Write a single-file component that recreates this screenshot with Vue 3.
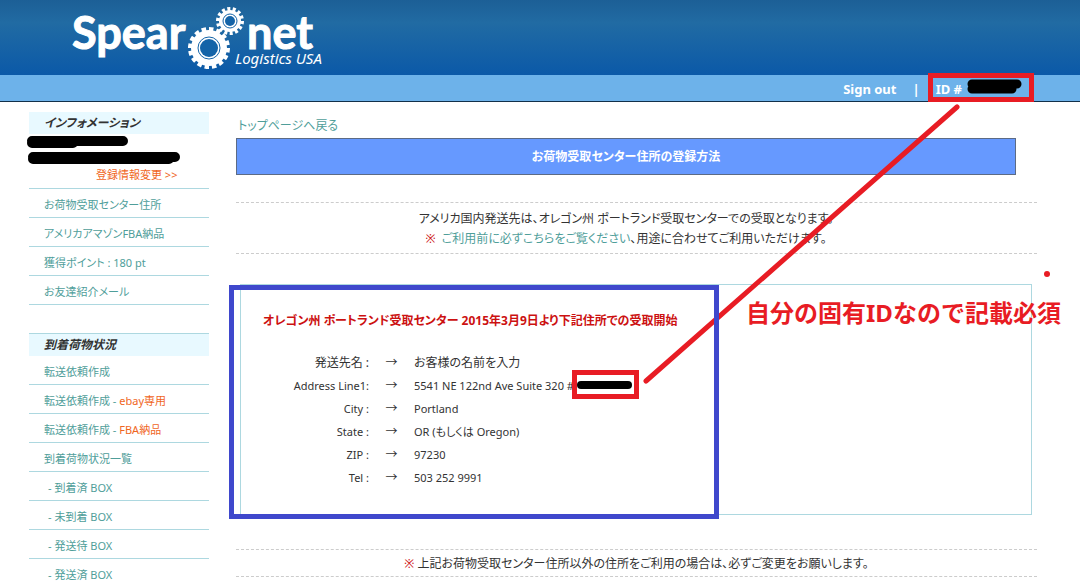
<template>
  <div class="page">
    <header class="site-header">
      <a class="logo" href="#" aria-label="Spearnet Logistics USA">
        <svg viewBox="0 0 270 75" width="270" height="75">
          <text class="logo-name" x="0" y="49">Spear</text>
          <text class="logo-name" x="175" y="49">net</text>
          <text class="logo-sub" x="163" y="64">Logistics USA</text>
          <g v-for="gear in gears" :key="gear.cx">
            <circle class="gear-teeth" :cx="gear.cx" :cy="gear.cy" :r="gear.r" :stroke-dasharray="gear.dash" pathLength="160" />
            <circle class="gear-body" :cx="gear.cx" :cy="gear.cy" :r="gear.r - 1" />
            <circle class="gear-ring" :cx="gear.cx" :cy="gear.cy" :r="gear.ring" />
            <circle class="gear-hole" :cx="gear.cx" :cy="gear.cy" :r="gear.ring - 2" />
          </g>
        </svg>
      </a>
    </header>
    <nav class="account-bar">
      <a href="#">Sign out</a>
      <span>|</span>
      <span class="account-id">ID #</span>
    </nav>

    <div class="layout">
      <aside class="sidebar">
        <section>
          <h2>インフォメーション</h2>
          <div class="profile">
            <svg class="redacted" viewBox="0 0 160 30" width="160" height="30">
              <path d="M7 7H98M7 9H48" />
              <path d="M8 23H150M8 25H144" />
            </svg>
            <a class="accent" href="#">登録情報変更 &gt;&gt;</a>
          </div>
          <ul>
            <li v-for="item in infoLinks" :key="item"><a href="#">{{ item }}</a></li>
          </ul>
        </section>
        <section class="packages">
          <h2>到着荷物状況</h2>
          <ul>
            <li v-for="item in packageLinks" :key="item.label + item.accent" :class="{ sub: item.sub }">
              <a href="#">{{ item.label }}<span v-if="item.accent" class="accent">{{ item.accent }}</span></a>
            </li>
          </ul>
        </section>
      </aside>

      <main class="content">
        <a class="back" href="#">トップページへ戻る</a>
        <h1>お荷物受取センター住所の登録方法</h1>
        <div class="notice intro">
          <p>アメリカ国内発送先は、オレゴン州 ポートランド受取センターでの受取となります。</p>
          <p><span class="mark">※</span>&nbsp; <a href="#">ご利用前に必ずこちらをご覧ください</a>、用途に合わせてご利用いただけます。</p>
        </div>
        <section class="address">
          <h3>オレゴン州 ポートランド受取センター 2015年3月9日より下記住所での受取開始</h3>
          <table>
            <tbody>
              <tr v-for="row in address" :key="row.label" :class="{ latin: row.latin }">
                <th scope="row">{{ row.label }}</th>
                <td class="arrow">→</td>
                <td>{{ row.value }}</td>
              </tr>
            </tbody>
          </table>
        </section>
        <div class="notice">
          <p><span class="mark">※</span> 上記お荷物受取センター住所以外の住所をご利用の場合は、必ずご変更をお願いします。</p>
        </div>
      </main>
    </div>

    <!-- hand-drawn markup lying over the page -->
    <div class="markup">
      <svg viewBox="0 0 1080 582" width="1080" height="582">
        <path class="pointer" d="M957 107L646 381" />
        <path class="frame-blue" d="M229 285H719V519H229ZM234 290V514H714V290Z" />
        <path class="frame-red" d="M928 73H1034V102H928ZM933 78V97H1029V78Z" />
        <path class="frame-red" d="M572 370H639V399H572ZM577 375V394H634V375Z" />
        <path class="ink" d="M972 84H1017M972 89H1012" />
        <path class="ink thin" d="M581 385H628" />
        <circle class="dot" cx="1047" cy="274" r="3" />
      </svg>
      <p>自分の固有IDなので記載必須</p>
    </div>
  </div>
</template>

<script setup>
const gears = [
  { cx: 137, cy: 48, r: 19, ring: 11, dash: '6 4' },
  { cx: 158, cy: 21, r: 12, ring: 7, dash: '6.4 5.03' },
]

const infoLinks = ['お荷物受取センター住所', 'アメリカアマゾンFBA納品', '獲得ポイント : 180 pt', 'お友達紹介メール']

const packageLinks = [
  { label: '転送依頼作成' },
  { label: '転送依頼作成 - ', accent: 'ebay専用' },
  { label: '転送依頼作成 - ', accent: 'FBA納品' },
  { label: '到着荷物状況一覧' },
  { label: '- 到着済 BOX', sub: true },
  { label: '- 未到着 BOX', sub: true },
  { label: '- 発送待 BOX', sub: true },
  { label: '- 発送済 BOX', sub: true },
]

const address = [
  { label: '発送先名 :', value: 'お客様の名前を入力' },
  { label: 'Address Line1:', value: '5541 NE 122nd Ave Suite 320 #', latin: true },
  { label: 'City :', value: 'Portland', latin: true },
  { label: 'State :', value: 'OR (もしくは Oregon)', latin: true },
  { label: 'ZIP :', value: '97230', latin: true },
  { label: 'Tel :', value: '503 252 9991', latin: true },
]
</script>

<style>
body {
  margin: 0;
  background: #ffffff;
}
</style>

<style scoped>
.page {
  position: relative;
  color: #333333;
  font-family: 'Noto Sans', 'Noto Sans CJK JP', sans-serif;
  font-size: 12px;
  line-height: 20px;
  font-feature-settings: 'palt';
}

h1,
h2,
h3,
p,
ul {
  margin: 0;
  padding: 0;
}

a {
  color: #4f9e9a;
  text-decoration: none;
}

.site-header {
  background: linear-gradient(#1c5f96, #216ba3 30%, #0b59a8);
}

.logo {
  display: block;
  width: 270px;
  height: 75px;
  margin-left: 72px;
}

.logo-name {
  fill: #ffffff;
  stroke: #ffffff;
  stroke-width: 1;
  font-family: Lato, sans-serif;
  font-size: 45px;
  font-weight: 700;
}

.logo-sub {
  fill: #ffffff;
  font-size: 15px;
  font-style: italic;
}

.gear-teeth {
  fill: none;
  stroke: #ffffff;
  stroke-width: 4;
}

.gear-body {
  fill: #ffffff;
}

.gear-ring {
  fill: #ffffff;
  stroke: #1464a8;
  stroke-width: 1;
}

.gear-hole {
  fill: #1464a8;
}

.account-bar {
  display: flex;
  justify-content: flex-end;
  gap: 16px;
  height: 26px;
  padding-right: 118px;
  background: #6db2ea;
  border-bottom: 1px solid #12304a;
  color: #ffffff;
  font-size: 13px;
  font-weight: 700;
  line-height: 28px;
}

.account-bar a {
  color: #ffffff;
}

.layout {
  display: flex;
  gap: 27px;
  padding: 10px 43px 0 29px;
}

.sidebar {
  flex: 0 0 180px;
  font-size: 11px;
}

.sidebar h2 {
  padding-left: 15px;
  background: #e8f9ff;
  font-size: 12px;
  font-style: italic;
  line-height: 22px;
}

.profile {
  display: flex;
  flex-direction: column;
  height: 54px;
  border-bottom: 1px solid #add8e0;
}

.redacted {
  margin-left: -4px;
  fill: none;
  stroke: #000000;
  stroke-width: 10;
  stroke-linecap: round;
}

.profile a {
  padding-left: 67px;
  line-height: 22px;
}

.accent {
  color: #f0661e;
}

.sidebar ul {
  list-style: none;
}

.sidebar li {
  height: 28px;
  padding-left: 15px;
  border-bottom: 1px solid #add8e0;
  line-height: 32px;
}

.sidebar li.sub {
  padding-left: 19px;
}

.packages {
  margin-top: 28px;
}

.packages h2 {
  border-top: 1px solid #add8e0;
}

.content {
  flex: 1;
  min-width: 0;
}

.back {
  display: block;
  padding: 4px 2px 2px;
}

h1 {
  margin-right: 21px;
  border: 1px solid #5c6b85;
  background: #6699ff;
  color: #ffffff;
  font-size: 12px;
  line-height: 35px;
  text-align: center;
}

.notice {
  padding: 4px 0 2px;
  border-top: 1px dashed #cccccc;
  border-bottom: 1px dashed #cccccc;
  text-align: center;
}

.intro {
  margin-top: 27px;
  padding: 6px 21px 4px 0;
}

.mark {
  color: #cc1111;
}

.address {
  box-sizing: border-box;
  height: 231px;
  margin: 30px 5px 34px 4px;
  padding: 26px 22px;
  border: 1px solid #add8e0;
}

h3 {
  color: #cc1111;
  font-size: 12px;
}

table {
  margin-top: 20px;
  border-collapse: collapse;
  line-height: 23px;
}

th,
td {
  padding: 0;
  font-weight: 400;
}

th {
  width: 106px;
  text-align: right;
}

.latin {
  font-size: 11px;
}

.arrow {
  width: 45px;
  font-size: 12px;
  text-align: center;
}

.markup {
  position: absolute;
  top: 0;
  left: 0;
  pointer-events: none;
}

.markup svg {
  display: block;
}

.markup p {
  position: absolute;
  top: 296px;
  left: 746px;
  color: #e81c24;
  font-size: 24px;
  font-weight: 700;
  font-feature-settings: normal;
  line-height: 34px;
  white-space: nowrap;
}

.frame-blue {
  fill: #3f48cc;
  fill-rule: evenodd;
}

.frame-red {
  fill: #e81c24;
  fill-rule: evenodd;
}

.ink {
  fill: none;
  stroke: #000000;
  stroke-width: 9;
  stroke-linecap: round;
}

.thin {
  stroke-width: 8;
}

.pointer {
  fill: none;
  stroke: #e81c24;
  stroke-width: 5;
  stroke-linecap: round;
}

.dot {
  fill: #e81c24;
}
</style>
